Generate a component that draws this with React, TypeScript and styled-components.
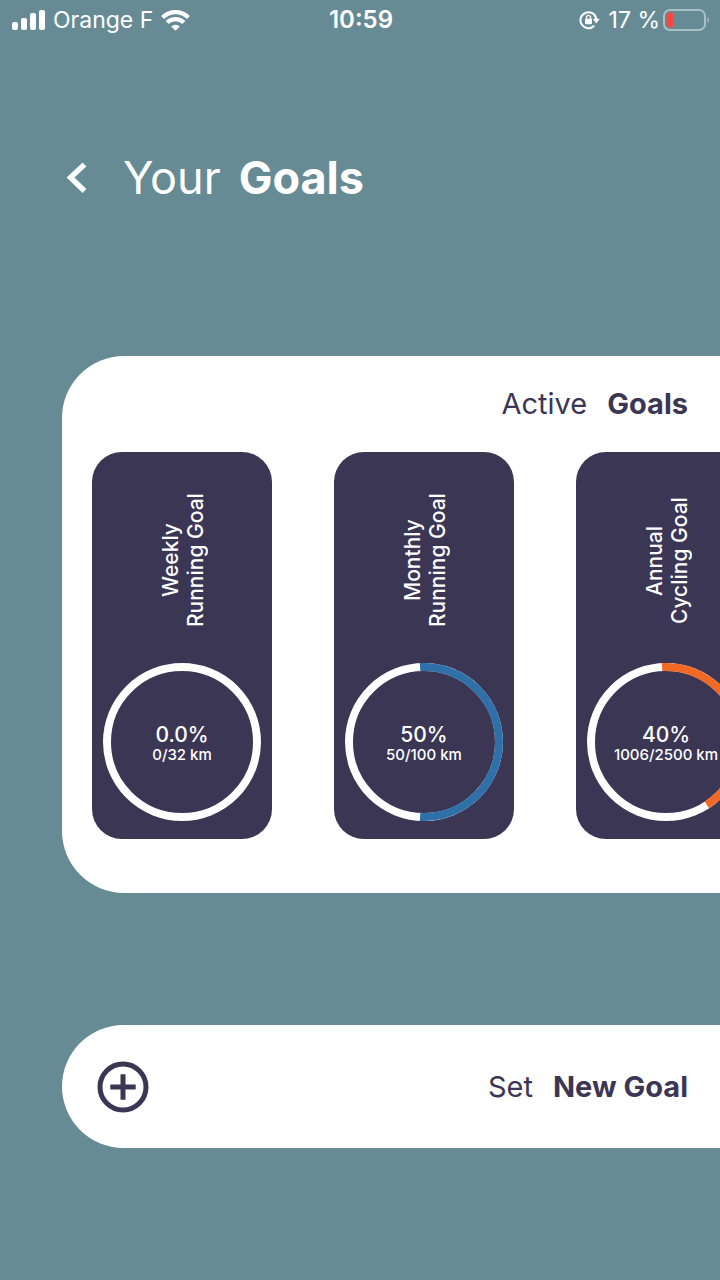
import React from "react";
import styled, { createGlobalStyle } from "styled-components";

const navy = "#3b3654";
const teal = "#678b94";

const GlobalStyle = createGlobalStyle`
  *, *::before, *::after { box-sizing: border-box; }
  body {
    margin: 0;
    background: ${teal};
    font-family: Inter, Roboto, "Liberation Sans", sans-serif;
  }
  h1, h2, h3, p { margin: 0; font-weight: 400; }
  button { border: 0; padding: 0; background: none; font: inherit; color: inherit; cursor: pointer; }
`;

const Screen = styled.div`
  min-height: 100vh;
  overflow: hidden;
  background: ${teal};
`;

const StatusBar = styled.header`
  display: grid;
  grid-template-columns: 1fr auto 1fr;
  align-items: center;
  height: 40px;
  padding: 0 10px 0 12px;
  color: #fff;
  font-size: 23px;
  line-height: 28px;
`;

const StatusGroup = styled.div<{ $end?: boolean; $gap: number }>`
  display: flex;
  align-items: center;
  justify-content: ${(p) => (p.$end ? "flex-end" : "flex-start")};
  gap: ${(p) => p.$gap}px;
  white-space: nowrap;
`;

const Clock = styled.time`
  font-size: 24px;
  font-weight: 600;
`;

const BatteryReading = styled.div`
  display: flex;
  align-items: center;
  gap: 3px;
`;

const Content = styled.main`
  padding-left: 62px;
`;

const TitleBar = styled.div`
  display: flex;
  align-items: center;
  gap: 35px;
  height: 56px;
  margin-top: 110px;
  padding-left: 4px;
  color: #fff;
`;

const BackButton = styled.button`
  display: flex;
`;

const Title = styled.h1`
  display: flex;
  gap: 18px;
  font-size: 45px;
  font-weight: 400;
  line-height: 56px;

  strong { font-weight: 700; }
`;

const Panel = styled.section`
  margin-top: 150px;
  padding: 30px 0 54px 30px;
  border-radius: 62px 0 0 62px;
  background: #fff;
  overflow: hidden;
`;

const SectionTitle = styled.h2`
  display: flex;
  justify-content: flex-end;
  gap: 20px;
  padding-right: 32px;
  color: ${navy};
  font-size: 29px;
  font-weight: 400;
  line-height: 36px;

  strong { font-weight: 700; }
`;

const GoalList = styled.ul`
  display: flex;
  gap: 62px;
  margin: 30px 0 0;
  padding: 0;
  list-style: none;
`;

const GoalCard = styled.li`
  display: flex;
  flex: none;
  flex-direction: column;
  align-items: center;
  width: 180px;
  padding: 28px 0 18px;
  border-radius: 30px;
  background: ${navy};
  color: #fff;
`;

const GoalName = styled.h3`
  display: flex;
  align-items: center;
  justify-content: center;
  height: 161px;
  padding-right: 2px;
  writing-mode: vertical-rl;
  transform: rotate(180deg);
  font-size: 21px;
  font-weight: 500;
  line-height: 25px;
  text-align: center;
  white-space: pre-line;
`;

const Dial = styled.div`
  display: grid;
  place-items: center;
  margin-top: 22px;

  > * { grid-area: 1 / 1; }
`;

const Reading = styled.div`
  padding-top: 4px;
  text-align: center;
`;

const Percent = styled.p`
  font-size: 21px;
  font-weight: 500;
  line-height: 22px;
`;

const Distance = styled.p`
  font-size: 15px;
  font-weight: 500;
  line-height: 18px;
  white-space: nowrap;
`;

const NewGoal = styled.button`
  display: flex;
  align-items: center;
  justify-content: space-between;
  width: 100%;
  height: 123px;
  margin-top: 132px;
  padding-left: 35px;
  border-radius: 62px 0 0 62px;
  background: #fff;
`;

const NewGoalLabel = styled.span`
  display: flex;
  gap: 20px;
  padding-right: 32px;
  color: ${navy};
  font-size: 29px;
  font-weight: 400;
  line-height: 36px;

  strong { font-weight: 700; }
`;

const SignalIcon = () => (
  <svg width="33" height="20" viewBox="0 0 33 20" fill="#fff" aria-hidden="true">
    <rect x="0" y="12" width="6" height="8" rx="2" />
    <rect x="9" y="8" width="6" height="12" rx="2" />
    <rect x="18" y="3" width="6" height="17" rx="2" />
    <rect x="27" y="0" width="6" height="20" rx="2" />
  </svg>
);

const WifiIcon = () => (
  <svg width="29" height="21" viewBox="0 0 29 21" aria-hidden="true">
    <g fill="none" stroke="#fff" strokeWidth="4.2">
      <path d="M1.600 7.400a18.400 18.400 0 0 1 25.800 0" />
      <path d="M6.200 12.600a11.800 11.800 0 0 1 16.600 0" />
    </g>
    <path fill="#fff" d="M14.500 20.800l-4.300-4.300a6 6 0 0 1 8.600 0z" />
  </svg>
);

const RotationLockIcon = () => (
  <svg width="21" height="20" viewBox="0 0 21 20" aria-hidden="true">
    <path d="M15.200 15.800a8 8 0 1 1 2.200-6.500" fill="none" stroke="#fff" strokeWidth="2" />
    <path d="M13.800 8.800h7l-3.500 4.600z" fill="#fff" />
    <rect x="6" y="8.800" width="7" height="5.400" rx="1" fill="#fff" />
    <path d="M7.500 9V7.400a2 2 0 0 1 4 0V9" fill="none" stroke="#fff" strokeWidth="1.400" />
  </svg>
);

const BatteryIcon = () => (
  <svg width="47" height="22" viewBox="0 0 47 22" aria-hidden="true">
    <rect x="1" y="1" width="41" height="20" rx="6" fill="none" stroke="#a9bfc4" strokeWidth="2" />
    <path d="M44.500 8c2 1 2 5 0 6z" fill="#a9bfc4" />
    <rect x="3.500" y="3.500" width="7" height="15" rx="3" fill="#fb4640" />
  </svg>
);

const BackIcon = () => (
  <svg width="22" height="32" viewBox="0 0 22 32" aria-hidden="true">
    <path d="M18.500 2.500L4.500 15.500l14 13.500" fill="none" stroke="#fff" strokeWidth="5.400" />
  </svg>
);

const AddIcon = () => (
  <svg width="52" height="52" viewBox="0 0 52 52" fill="none" stroke={navy} aria-hidden="true">
    <circle cx="26" cy="26" r="23" strokeWidth="5" />
    <path d="M26 13.300v25.400M13.300 26h25.400" strokeWidth="5" />
  </svg>
);

const RADIUS = 75;
const OVERHANG = 3;

function pointAt(degrees: number) {
  const a = (degrees * Math.PI) / 180;
  return `${79 + RADIUS * Math.sin(a)} ${79 - RADIUS * Math.cos(a)}`;
}

function Ring({ share, color }: { share: number; color: string }) {
  const end = share * 360 + OVERHANG;
  const large = end + OVERHANG > 180 ? 1 : 0;
  return (
    <svg width="158" height="158" viewBox="0 0 158 158" fill="none" strokeWidth="8" aria-hidden="true">
      <circle cx="79" cy="79" r={RADIUS} stroke="#fff" />
      {share > 0 && (
        <path
          d={`M${pointAt(-OVERHANG)}A${RADIUS} ${RADIUS} 0 ${large} 1 ${pointAt(end)}`}
          stroke={color}
        />
      )}
    </svg>
  );
}

const goals = [
  { name: "Weekly\nRunning Goal", percent: "0.0%", distance: "0/32 km", share: 0, color: "#2f70a9" },
  { name: "Monthly\nRunning Goal", percent: "50%", distance: "50/100 km", share: 0.5, color: "#2f70a9" },
  { name: "Annual\nCycling Goal", percent: "40%", distance: "1006/2500 km", share: 0.4, color: "#f16a25" },
];

export default function App() {
  return (
    <Screen>
      <GlobalStyle />
      <StatusBar>
        <StatusGroup $gap={8}>
          <SignalIcon />
          <span>Orange F</span>
          <WifiIcon />
        </StatusGroup>
        <Clock>10:59</Clock>
        <StatusGroup $end $gap={9}>
          <RotationLockIcon />
          <BatteryReading>
            <span>17 %</span>
            <BatteryIcon />
          </BatteryReading>
        </StatusGroup>
      </StatusBar>
      <Content>
        <TitleBar>
          <BackButton aria-label="Back">
            <BackIcon />
          </BackButton>
          <Title>
            <span>Your</span>
            <strong>Goals</strong>
          </Title>
        </TitleBar>
        <Panel>
          <SectionTitle>
            <span>Active</span>
            <strong>Goals</strong>
          </SectionTitle>
          <GoalList>
            {goals.map((goal) => (
              <GoalCard key={goal.name}>
                <GoalName>{goal.name}</GoalName>
                <Dial>
                  <Ring share={goal.share} color={goal.color} />
                  <Reading>
                    <Percent>{goal.percent}</Percent>
                    <Distance>{goal.distance}</Distance>
                  </Reading>
                </Dial>
              </GoalCard>
            ))}
          </GoalList>
        </Panel>
        <NewGoal>
          <AddIcon />
          <NewGoalLabel>
            <span>Set</span>
            <strong>New Goal</strong>
          </NewGoalLabel>
        </NewGoal>
      </Content>
    </Screen>
  );
}
